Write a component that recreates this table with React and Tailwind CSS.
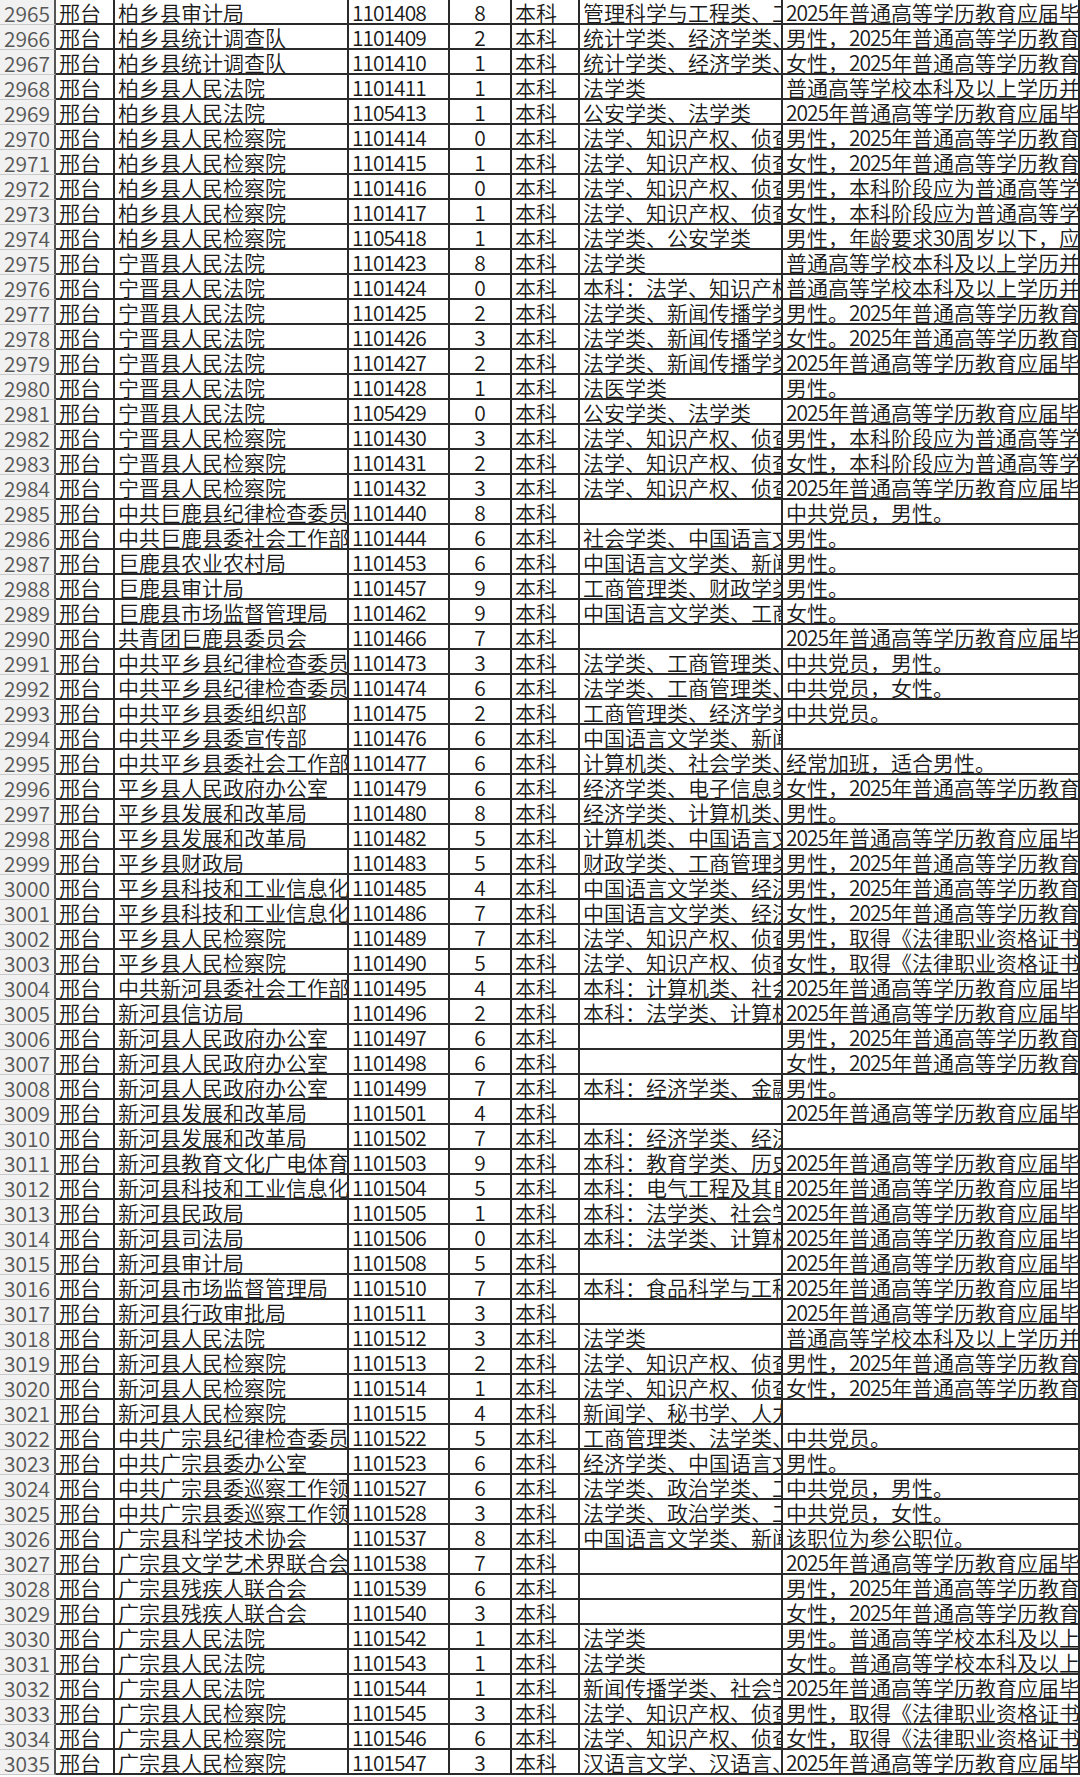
import React from "react";

const rows = [
  ["2965", "柏乡县审计局", "1101408", "8", "管理科学与工程类、工商管理类", "2025年普通高等学历教育应届毕业生"],
  ["2966", "柏乡县统计调查队", "1101409", "2", "统计学类、经济学类、数学类", "男性，2025年普通高等学历教育应届毕业生"],
  ["2967", "柏乡县统计调查队", "1101410", "1", "统计学类、经济学类、数学类", "女性，2025年普通高等学历教育应届毕业生"],
  ["2968", "柏乡县人民法院", "1101411", "1", "法学类", "普通高等学校本科及以上学历并取得学位"],
  ["2969", "柏乡县人民法院", "1105413", "1", "公安学类、法学类", "2025年普通高等学历教育应届毕业生"],
  ["2970", "柏乡县人民检察院", "1101414", "0", "法学、知识产权、侦查学", "男性，2025年普通高等学历教育应届毕业生"],
  ["2971", "柏乡县人民检察院", "1101415", "1", "法学、知识产权、侦查学", "女性，2025年普通高等学历教育应届毕业生"],
  ["2972", "柏乡县人民检察院", "1101416", "0", "法学、知识产权、侦查学", "男性，本科阶段应为普通高等学校"],
  ["2973", "柏乡县人民检察院", "1101417", "1", "法学、知识产权、侦查学", "女性，本科阶段应为普通高等学校"],
  ["2974", "柏乡县人民检察院", "1105418", "1", "法学类、公安学类", "男性，年龄要求30周岁以下，应届"],
  ["2975", "宁晋县人民法院", "1101423", "8", "法学类", "普通高等学校本科及以上学历并取得学位"],
  ["2976", "宁晋县人民法院", "1101424", "0", "本科：法学、知识产权", "普通高等学校本科及以上学历并取得学位"],
  ["2977", "宁晋县人民法院", "1101425", "2", "法学类、新闻传播学类", "男性。2025年普通高等学历教育应届毕业生"],
  ["2978", "宁晋县人民法院", "1101426", "3", "法学类、新闻传播学类", "女性。2025年普通高等学历教育应届毕业生"],
  ["2979", "宁晋县人民法院", "1101427", "2", "法学类、新闻传播学类", "2025年普通高等学历教育应届毕业生"],
  ["2980", "宁晋县人民法院", "1101428", "1", "法医学类", "男性。"],
  ["2981", "宁晋县人民法院", "1105429", "0", "公安学类、法学类", "2025年普通高等学历教育应届毕业生"],
  ["2982", "宁晋县人民检察院", "1101430", "3", "法学、知识产权、侦查学", "男性，本科阶段应为普通高等学校"],
  ["2983", "宁晋县人民检察院", "1101431", "2", "法学、知识产权、侦查学", "女性，本科阶段应为普通高等学校"],
  ["2984", "宁晋县人民检察院", "1101432", "3", "法学、知识产权、侦查学", "2025年普通高等学历教育应届毕业生"],
  ["2985", "中共巨鹿县纪律检查委员会", "1101440", "8", "", "中共党员，男性。"],
  ["2986", "中共巨鹿县委社会工作部", "1101444", "6", "社会学类、中国语言文学类", "男性。"],
  ["2987", "巨鹿县农业农村局", "1101453", "6", "中国语言文学类、新闻传播学类", "男性。"],
  ["2988", "巨鹿县审计局", "1101457", "9", "工商管理类、财政学类", "男性。"],
  ["2989", "巨鹿县市场监督管理局", "1101462", "9", "中国语言文学类、工商管理类", "女性。"],
  ["2990", "共青团巨鹿县委员会", "1101466", "7", "", "2025年普通高等学历教育应届毕业生"],
  ["2991", "中共平乡县纪律检查委员会", "1101473", "3", "法学类、工商管理类、财政学类", "中共党员，男性。"],
  ["2992", "中共平乡县纪律检查委员会", "1101474", "6", "法学类、工商管理类、财政学类", "中共党员，女性。"],
  ["2993", "中共平乡县委组织部", "1101475", "2", "工商管理类、经济学类", "中共党员。"],
  ["2994", "中共平乡县委宣传部", "1101476", "6", "中国语言文学类、新闻传播学类", ""],
  ["2995", "中共平乡县委社会工作部", "1101477", "6", "计算机类、社会学类、法学类", "经常加班，适合男性。"],
  ["2996", "平乡县人民政府办公室", "1101479", "6", "经济学类、电子信息类", "女性，2025年普通高等学历教育应届毕业生"],
  ["2997", "平乡县发展和改革局", "1101480", "8", "经济学类、计算机类、统计学类", "男性。"],
  ["2998", "平乡县发展和改革局", "1101482", "5", "计算机类、中国语言文学类", "2025年普通高等学历教育应届毕业生"],
  ["2999", "平乡县财政局", "1101483", "5", "财政学类、工商管理类", "男性，2025年普通高等学历教育应届毕业生"],
  ["3000", "平乡县科技和工业信息化局", "1101485", "4", "中国语言文学类、经济学类", "男性，2025年普通高等学历教育应届毕业生"],
  ["3001", "平乡县科技和工业信息化局", "1101486", "7", "中国语言文学类、经济学类", "女性，2025年普通高等学历教育应届毕业生"],
  ["3002", "平乡县人民检察院", "1101489", "7", "法学、知识产权、侦查学", "男性，取得《法律职业资格证书》"],
  ["3003", "平乡县人民检察院", "1101490", "5", "法学、知识产权、侦查学", "女性，取得《法律职业资格证书》"],
  ["3004", "中共新河县委社会工作部", "1101495", "4", "本科：计算机类、社会学类", "2025年普通高等学历教育应届毕业生"],
  ["3005", "新河县信访局", "1101496", "2", "本科：法学类、计算机类", "2025年普通高等学历教育应届毕业生"],
  ["3006", "新河县人民政府办公室", "1101497", "6", "", "男性，2025年普通高等学历教育应届毕业生"],
  ["3007", "新河县人民政府办公室", "1101498", "6", "", "女性，2025年普通高等学历教育应届毕业生"],
  ["3008", "新河县人民政府办公室", "1101499", "7", "本科：经济学类、金融学类", "男性。"],
  ["3009", "新河县发展和改革局", "1101501", "4", "", "2025年普通高等学历教育应届毕业生"],
  ["3010", "新河县发展和改革局", "1101502", "7", "本科：经济学类、经济与贸易类", ""],
  ["3011", "新河县教育文化广电体育局", "1101503", "9", "本科：教育学类、历史学类", "2025年普通高等学历教育应届毕业生"],
  ["3012", "新河县科技和工业信息化局", "1101504", "5", "本科：电气工程及其自动化", "2025年普通高等学历教育应届毕业生"],
  ["3013", "新河县民政局", "1101505", "1", "本科：法学类、社会学类", "2025年普通高等学历教育应届毕业生"],
  ["3014", "新河县司法局", "1101506", "0", "本科：法学类、计算机类", "2025年普通高等学历教育应届毕业生"],
  ["3015", "新河县审计局", "1101508", "5", "", "2025年普通高等学历教育应届毕业生"],
  ["3016", "新河县市场监督管理局", "1101510", "7", "本科：食品科学与工程类", "2025年普通高等学历教育应届毕业生"],
  ["3017", "新河县行政审批局", "1101511", "3", "", "2025年普通高等学历教育应届毕业生"],
  ["3018", "新河县人民法院", "1101512", "3", "法学类", "普通高等学校本科及以上学历并取得学位"],
  ["3019", "新河县人民检察院", "1101513", "2", "法学、知识产权、侦查学", "男性，2025年普通高等学历教育应届毕业生"],
  ["3020", "新河县人民检察院", "1101514", "1", "法学、知识产权、侦查学", "女性，2025年普通高等学历教育应届毕业生"],
  ["3021", "新河县人民检察院", "1101515", "4", "新闻学、秘书学、人力资源管理", ""],
  ["3022", "中共广宗县纪律检查委员会", "1101522", "5", "工商管理类、法学类、财政学类", "中共党员。"],
  ["3023", "中共广宗县委办公室", "1101523", "6", "经济学类、中国语言文学类", "男性。"],
  ["3024", "中共广宗县委巡察工作领导小组", "1101527", "6", "法学类、政治学类、工商管理类", "中共党员，男性。"],
  ["3025", "中共广宗县委巡察工作领导小组", "1101528", "3", "法学类、政治学类、工商管理类", "中共党员，女性。"],
  ["3026", "广宗县科学技术协会", "1101537", "8", "中国语言文学类、新闻传播学类", "该职位为参公职位。"],
  ["3027", "广宗县文学艺术界联合会", "1101538", "7", "", "2025年普通高等学历教育应届毕业生"],
  ["3028", "广宗县残疾人联合会", "1101539", "6", "", "男性，2025年普通高等学历教育应届毕业生"],
  ["3029", "广宗县残疾人联合会", "1101540", "3", "", "女性，2025年普通高等学历教育应届毕业生"],
  ["3030", "广宗县人民法院", "1101542", "1", "法学类", "男性。普通高等学校本科及以上学历"],
  ["3031", "广宗县人民法院", "1101543", "1", "法学类", "女性。普通高等学校本科及以上学历"],
  ["3032", "广宗县人民法院", "1101544", "1", "新闻传播学类、社会学类", "2025年普通高等学历教育应届毕业生"],
  ["3033", "广宗县人民检察院", "1101545", "3", "法学、知识产权、侦查学", "男性，取得《法律职业资格证书》"],
  ["3034", "广宗县人民检察院", "1101546", "6", "法学、知识产权、侦查学", "女性，取得《法律职业资格证书》"],
  ["3035", "广宗县人民检察院", "1101547", "3", "汉语言文学、汉语言、秘书学", "2025年普通高等学历教育应届毕业生"],
];

function T({ s }) {
  return s.split(/(\d+)/).map((p, i) =>
    /^\d+$/.test(p) ? (
      <span key={i} className="tracking-[-1px]">
        {p}
      </span>
    ) : (
      <React.Fragment key={i}>{p}</React.Fragment>
    )
  );
}

const cell =
  "h-[25px] overflow-hidden whitespace-nowrap border-r-2 border-b-2 border-[#2a2a2a] leading-[23px] pl-[3px] pt-[1px] text-[#1a1a1a] font-[350]";

export default function App() {
  return (
    <div
      className="w-[1080px] h-[1777px] overflow-hidden bg-white text-[21px]"
      style={{ fontFamily: '"Noto Sans CJK SC", "Noto Sans", sans-serif' }}
    >
      <div className="grid grid-cols-[56px_59px_234px_101px_62px_68px_203px_297px]">
        {rows.map((r) => (
          <React.Fragment key={r[0]}>
            <div className="h-[25px] overflow-hidden whitespace-nowrap bg-[#f1f1f1] border-b border-b-[#c9c9c9] border-r-2 border-r-[#555] text-center leading-[24px] pt-[1px] text-[#575757] font-[350]">
              {r[0]}
            </div>
            <div className={cell}>邢台</div>
            <div className={cell}>{r[1]}</div>
            <div className={cell}>
              <T s={r[2]} />
            </div>
            <div className={cell + " text-center !pl-0"}>{r[3]}</div>
            <div className={cell}>本科</div>
            <div className={cell}>{r[4]}</div>
            <div className={cell + " border-r-0"}>
              <T s={r[5]} />
            </div>
          </React.Fragment>
        ))}
      </div>
    </div>
  );
}
